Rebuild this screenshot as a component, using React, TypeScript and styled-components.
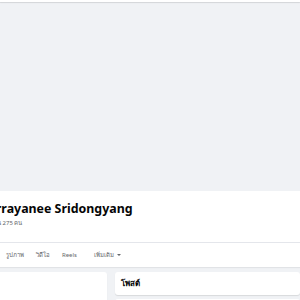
import React from 'react';
import styled, { createGlobalStyle } from 'styled-components';

const GlobalStyle = createGlobalStyle`
  html, body {
    margin: 0;
    padding: 0;
    background: #f0f2f5;
    font-family: "Noto Sans", "Liberation Sans", "DejaVu Sans", sans-serif;
    overflow: hidden;
  }
`;

const Page = styled.div`
  width: 300px;
  height: 300px;
  overflow: hidden;
  display: flex;
  flex-direction: column;

  & > * {
    flex-shrink: 0;
  }
`;

const TopBar = styled.div`
  height: 2px;
  background: #ffffff;
  box-shadow: 0 1px 1px rgba(0, 0, 0, 0.12);
  position: relative;
  z-index: 1;
`;

const Cover = styled.div`
  height: 189px;
  background: #f0f2f5;
`;

const Header = styled.div`
  background: #ffffff;
  display: flex;
  flex-direction: column;
  box-shadow: 0 1px 1px rgba(0, 0, 0, 0.06);
`;

const Identity = styled.div`
  display: flex;
  flex-direction: column;
  padding: 9px 0 14px;
  gap: 2px;
`;

const Name = styled.h1`
  margin: 0 0 0 -12px;
  font-size: 12.4px;
  line-height: 17px;
  font-weight: 700;
  color: #050505;
  white-space: nowrap;
`;

const Friends = styled.div`
  margin-left: -13px;
  font-size: 6px;
  line-height: 9px;
  color: #65676b;
  white-space: nowrap;
`;

const Divider = styled.div`
  height: 1px;
  background: #e4e6eb;
`;

const Tabs = styled.nav`
  display: flex;
  align-items: center;
  height: 24px;
`;

const Tab = styled.span<{ $extra?: number }>`
  padding: 0 6px;
  margin-left: ${p => p.$extra ?? 0}px;
  font-size: 6px;
  font-weight: 400;
  color: #65676b;
  white-space: nowrap;
  display: flex;
  align-items: center;
  gap: 3px;
`;

const Caret = styled.span`
  display: inline-block;
  width: 0;
  height: 0;
  border-left: 2px solid transparent;
  border-right: 2px solid transparent;
  border-top: 2px solid #65676b;
`;

const Body = styled.div`
  display: flex;
  gap: 8px;
  padding-top: 5px;
  flex: 1 0 auto;
`;

const LeftColumn = styled.div`
  width: 107px;
  flex-shrink: 0;
  display: flex;
`;

const RightColumn = styled.div`
  flex: 1;
  display: flex;
  flex-direction: column;
  gap: 4px;
`;

const Card = styled.div<{ $flatLeft?: boolean }>`
  background: #ffffff;
  border-radius: ${p => (p.$flatLeft ? '0 3px 3px 0' : '3px')};
  box-shadow: 0 1px 1px rgba(0, 0, 0, 0.1);
`;

const FeedCard = styled(Card)`
  height: 23px;
  flex-shrink: 0;
  display: flex;
  align-items: center;
  padding-left: 6px;
`;

const CardTitle = styled.h2`
  margin: 0;
  font-size: 8px;
  font-weight: 700;
  color: #050505;
`;

const Filler = styled(Card)`
  flex: 1;
  min-height: 60px;
`;

export default function App() {
  return (
    <Page>
      <GlobalStyle />
      <TopBar />
      <Cover />
      <Header>
        <Identity>
          <Name>Jirrayanee Sridongyang</Name>
          <Friends>เพื่อน 275 คน</Friends>
        </Identity>
        <Divider />
        <Tabs>
          <Tab>รูปภาพ</Tab>
          <Tab>วิดีโอ</Tab>
          <Tab>Reels</Tab>
          <Tab $extra={5}>
            เพิ่มเติม <Caret />
          </Tab>
        </Tabs>
      </Header>
      <Body>
        <LeftColumn>
          <Filler $flatLeft />
        </LeftColumn>
        <RightColumn>
          <FeedCard>
            <CardTitle>โพสต์</CardTitle>
          </FeedCard>
          <Filler />
        </RightColumn>
      </Body>
    </Page>
  );
}
